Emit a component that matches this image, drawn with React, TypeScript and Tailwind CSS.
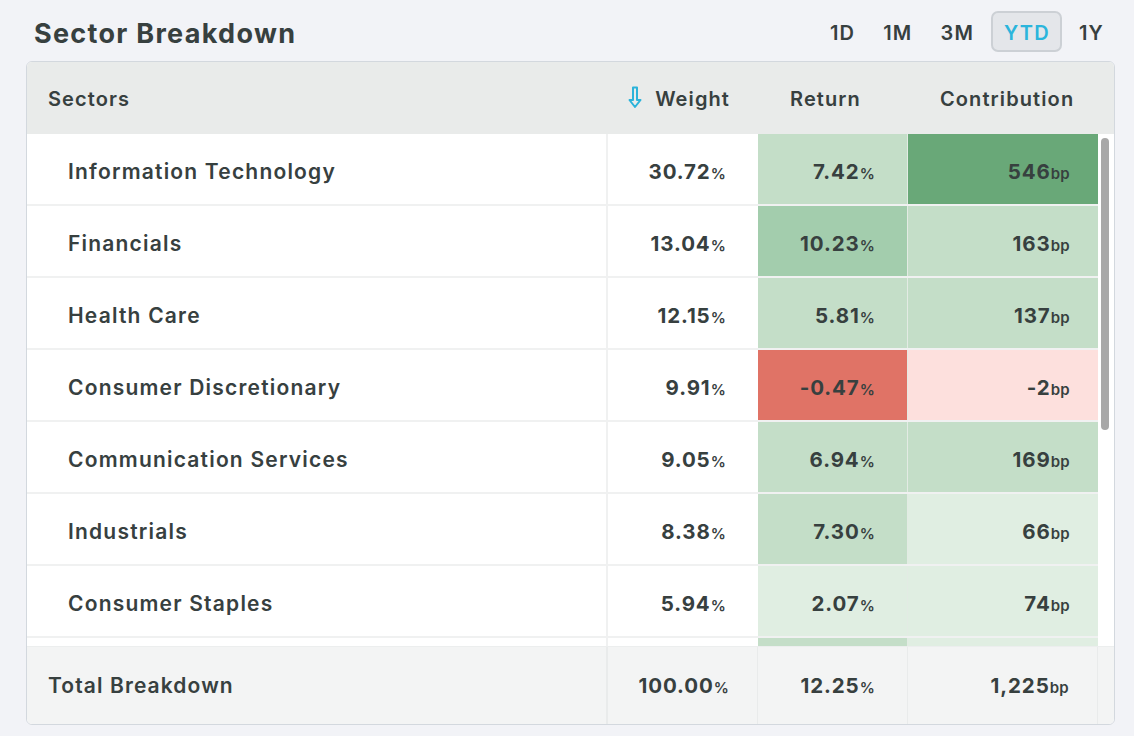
import React from "react";

type Row = {
  name: string;
  weight: string;
  ret: string;
  retBg: string;
  contrib: string;
  contribBg: string;
};

const ROWS: Row[] = [
  { name: "Information Technology", weight: "30.72", ret: "7.42", retBg: "bg-[#c4dec8]", contrib: "546", contribBg: "bg-[#69a878]" },
  { name: "Financials", weight: "13.04", ret: "10.23", retBg: "bg-[#a3cdad]", contrib: "163", contribBg: "bg-[#c4dec8]" },
  { name: "Health Care", weight: "12.15", ret: "5.81", retBg: "bg-[#c4dec8]", contrib: "137", contribBg: "bg-[#c4dec8]" },
  { name: "Consumer Discretionary", weight: "9.91", ret: "-0.47", retBg: "bg-[#e07366]", contrib: "-2", contribBg: "bg-[#fde0dd]" },
  { name: "Communication Services", weight: "9.05", ret: "6.94", retBg: "bg-[#c4dec8]", contrib: "169", contribBg: "bg-[#c4dec8]" },
  { name: "Industrials", weight: "8.38", ret: "7.30", retBg: "bg-[#c4dec8]", contrib: "66", contribBg: "bg-[#e0eee2]" },
  { name: "Consumer Staples", weight: "5.94", ret: "2.07", retBg: "bg-[#e0eee2]", contrib: "74", contribBg: "bg-[#e0eee2]" },
];

const PERIODS = ["1D", "1M", "3M", "YTD", "1Y"];

function Num({ v, unit }: { v: string; unit: string }) {
  return (
    <span className="font-bold text-[20.5px] tracking-[0.9px]">
      {v}
      <span className="text-[15px] font-semibold tracking-[0.3px]">{unit}</span>
    </span>
  );
}

function SortArrow() {
  return (
    <svg width="14" height="23" viewBox="0 0 14 23" fill="none">
      <path d="M5 1.5H9V14H12.5L7 21L1.5 14H5Z" stroke="#2bb3da" strokeWidth="2" strokeLinejoin="round" />
    </svg>
  );
}

export default function App() {
  return (
    <div className="w-[1134px] h-[736px] bg-[#f2f3f7] text-[#37403f] overflow-hidden" style={{ fontFamily: "Inter, 'Noto Sans', sans-serif" }}>
      {/* title row */}
      <div className="h-[61px] flex items-center justify-between pl-[34px] pr-[19px]">
        <h1 className="text-[27px] font-bold tracking-[1.3px] mt-[7px]">Sector Breakdown</h1>
        <div className="flex items-center gap-[6px] mt-[2px]">
          {PERIODS.map(p => (
            <span
              key={p}
              className={
                p === "YTD"
                  ? "h-[41px] flex items-center pl-[11px] pr-[10px] pt-[2px] rounded-[7px] border-2 border-[#ccd0d5] bg-[#e4e6ea] text-[#2bb5dc] text-[20px] font-semibold tracking-[1.2px]"
                  : "h-[41px] flex items-center pl-[11px] pr-[11px] pt-[2px] text-[20px] font-semibold tracking-[1.2px]"
              }
            >
              {p}
            </span>
          ))}
        </div>
      </div>

      {/* card */}
      <div className="ml-[26px] w-[1089px] h-[664px] border border-[#d3d8de] rounded-[6px] overflow-hidden flex flex-col bg-white">
        {/* header */}
        <div className="h-[72px] shrink-0 flex items-center pt-[1px] bg-[#e9ebea] text-[20px] font-semibold tracking-[1.1px]">
          <div className="w-[581px] pl-[21px]">Sectors</div>
          <div className="w-[150px] flex items-center justify-end gap-[13px] pr-[28px]">
            <span className="-mt-[3px]"><SortArrow /></span>
            <span>Weight</span>
          </div>
          <div className="w-[150px] pl-[32px]">Return</div>
          <div className="w-[206px] pl-[32px]">Contribution</div>
        </div>

        {/* body */}
        <div className="h-[512px] shrink-0 flex overflow-hidden">
          <div className="w-[1071px] shrink-0">
            {ROWS.map(r => (
              <div key={r.name} className="h-[72px] flex border-b-2 border-[#f0f1f1]">
                <div className="w-[581px] flex items-center pt-[6px] pl-[41px] text-[21px] font-semibold tracking-[1.2px] border-r-2 border-[#f0f1f1]">
                  {r.name}
                </div>
                <div className="w-[150px] flex items-center justify-end pt-[6px] pr-[32px]">
                  <Num v={r.weight} unit="%" />
                </div>
                <div className={`w-[150px] flex items-center justify-end pt-[6px] pr-[32px] border-r border-[#e3ebe4] ${r.retBg}`}>
                  <Num v={r.ret} unit="%" />
                </div>
                <div className={`w-[190px] flex items-center justify-end pt-[6px] pr-[28px] ${r.contribBg}`}>
                  <Num v={r.contrib} unit="bp" />
                </div>
              </div>
            ))}
            {/* next row, scrolled out of view */}
            <div className="h-[8px] flex">
              <div className="w-[581px] border-r-2 border-[#f0f1f1]" />
              <div className="w-[150px]" />
              <div className="w-[150px] bg-[#c4dec8] border-r border-[#e3ebe4]" />
              <div className="w-[190px] bg-[#e0eee2]" />
            </div>
          </div>
          {/* scrollbar gutter */}
          <div className="flex-1 bg-white pl-[3px] pt-[4px]">
            <div className="w-[8px] h-[292px] rounded-full bg-[#a8a8a8]" />
          </div>
        </div>

        {/* footer */}
        <div className="flex-1 flex bg-[#f3f4f4] border-t border-[#eceeee]">
          <div className="w-[581px] flex items-center pt-[1px] pl-[21px] text-[21px] font-semibold tracking-[1.1px] border-r-2 border-[#e9ebeb]">
            Total Breakdown
          </div>
          <div className="w-[150px] flex items-center justify-end pt-[1px] pr-[28px] border-r border-[#e9ebeb]">
            <Num v="100.00" unit="%" />
          </div>
          <div className="w-[150px] flex items-center justify-end pt-[1px] pr-[32px] border-r border-[#e9ebeb]">
            <Num v="12.25" unit="%" />
          </div>
          <div className="w-[190px] flex items-center justify-end pt-[1px] pr-[28px] border-r border-[#e9ebeb]">
            <Num v="1,225" unit="bp" />
          </div>
        </div>
      </div>
    </div>
  );
}
